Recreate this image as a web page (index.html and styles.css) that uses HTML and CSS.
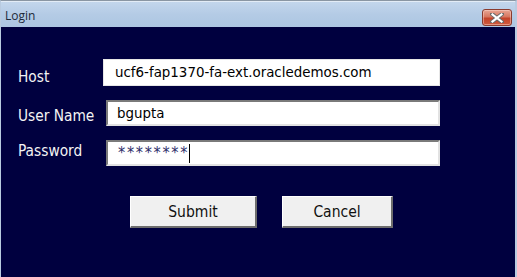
FILE: index.html
```html
<!DOCTYPE html>
<html>
<head>
<meta charset="utf-8">
<link rel="stylesheet" href="styles.css">
</head>
<body>
<div class="window">
  <div class="titlebar">
    <span class="title">Login</span>
    <button class="close" aria-label="Close">
      <svg width="14" height="10" viewBox="0 0 14 10">
        <path d="M2 1 L12 9 M12 1 L2 9" stroke="#6b6b6b" stroke-width="4" stroke-linecap="square"/>
        <path d="M2.5 1.5 L11.5 8.5 M11.5 1.5 L2.5 8.5" stroke="#ffffff" stroke-width="2.2" stroke-linecap="square"/>
      </svg>
    </button>
  </div>
  <div class="content">
    <div class="form">
      <label class="label label-host">Host</label>
      <div class="field field-host">ucf6-fap1370-fa-ext.oracledemos.com</div>
      <label class="label label-user">User Name</label>
      <div class="field field-inset">bgupta</div>
      <label class="label label-pass">Password</label>
      <div class="field field-inset"><span class="stars">********</span><span class="caret"></span></div>
    </div>
    <div class="buttons">
      <button class="btn btn-submit">Submit</button>
      <button class="btn btn-cancel">Cancel</button>
    </div>
  </div>
</div>
</body>
</html>
```
FILE: styles.css
```css
html, body {
  margin: 0;
  padding: 0;
}
body {
  width: 517px;
  height: 277px;
  overflow: hidden;
  font-family: "DejaVu Sans Condensed", "DejaVu Sans", sans-serif;
  font-stretch: condensed;
}
.window {
  width: 517px;
  height: 277px;
  box-sizing: border-box;
  display: flex;
  flex-direction: column;
  border-left: 1px solid #b9cbe0;
  border-right: 2px solid #b9cbe0;
  border-top: 1px solid #8a96a3;
  background: #b9cfe7;
}
.titlebar {
  height: 26px;
  box-sizing: border-box;
  display: flex;
  align-items: center;
  justify-content: space-between;
  padding: 0 3px 0 4px;
  background: linear-gradient(#c3d6ec, #b4cbe5 50%, #adc6e2);
  border-top: 1px solid #e3ecf6;
}
.title {
  font-family: "Open Sans", "Noto Sans", sans-serif;
  font-stretch: normal;
  font-size: 12px;
  color: #1e2a3a;
  padding-top: 1px;
}
.close {
  width: 30px;
  height: 17px;
  margin-top: 6px;
  padding: 0;
  border: 1px solid #8a3b2e;
  border-radius: 3px;
  background: linear-gradient(#e8a593, #d77760 45%, #c4432a 55%, #cf5a3f);
  display: flex;
  align-items: center;
  justify-content: center;
  box-shadow: inset 0 0 0 1px rgba(255,220,210,0.45);
}
.content {
  flex: 1;
  background: #00003f;
  padding: 31px 0 0 17px;
  display: flex;
  flex-direction: column;
}
.form {
  display: grid;
  grid-template-columns: 88px 334px;
  row-gap: 14px;
  align-items: center;
}
.label {
  color: #f4f4f4;
  font-size: 15.3px;
}
.label-host { padding-top: 10px; }
.label-user { padding-top: 6px; }
.label-pass { padding-bottom: 5px; }
.field {
  height: 26px;
  box-sizing: border-box;
  background: #ffffff;
  color: #000000;
  font-size: 14.9px;
  display: flex;
  align-items: center;
  padding-left: 9px;
}
.field-host {
  margin-left: -3px;
  width: 337px;
  height: 27px;
  padding-left: 11px;
  border: 1px solid #e6e6e6;
}
.field-inset {
  border-top: 2px solid #7a7a7a;
  border-left: 2px solid #7a7a7a;
  border-right: 2px solid #e2e2e2;
  border-bottom: 2px solid #e2e2e2;
}
.stars {
  color: #2e2e6a;
  font-size: 16px;
  letter-spacing: 1.7px;
  padding-bottom: 2px;
  padding-left: 1px;
}
.caret {
  width: 1px;
  height: 19px;
  background: #000;
  margin-left: 0;
}
.buttons {
  display: flex;
  margin-top: 30px;
  padding-left: 112px;
  gap: 25px;
}
.btn {
  height: 32px;
  box-sizing: border-box;
  background: #f0f0f0;
  border-top: 1px solid #ffffff;
  border-left: 1px solid #ffffff;
  border-right: 2px solid #6d6d6d;
  border-bottom: 2px solid #6d6d6d;
  font-family: "DejaVu Sans Condensed", "DejaVu Sans", sans-serif;
  font-stretch: condensed;
  font-size: 15.5px;
  color: #111111;
  padding: 0;
}
.btn-submit { width: 127px; }
.btn-cancel { width: 111px; }
```
